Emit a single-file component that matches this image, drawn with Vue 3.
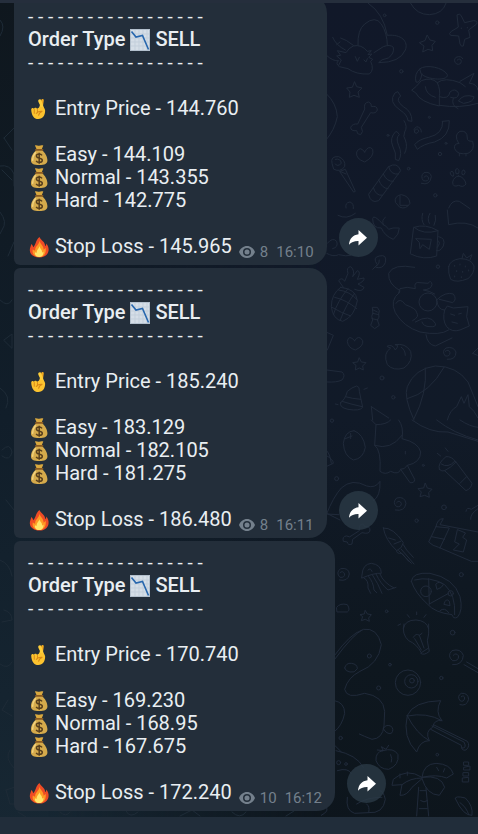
<template>
  <div class="screen">
    <svg class="wallpaper" viewBox="0 0 478 834" preserveAspectRatio="xMaxYMin slice" aria-hidden="true">
      <defs>
        <linearGradient id="wall-base" x1="0" y1="0" x2="0" y2="1">
          <stop offset="0" stop-color="#0f171e" />
          <stop offset="0.5" stop-color="#111e2a" />
          <stop offset="1" stop-color="#172733" />
        </linearGradient>
        <linearGradient id="wall-side" x1="0" y1="0" x2="0" y2="1">
          <stop offset="0" stop-color="#111829" />
          <stop offset="0.5" stop-color="#111a28" />
          <stop offset="0.8" stop-color="#0e171f" />
          <stop offset="1" stop-color="#0d151c" />
        </linearGradient>
        <linearGradient id="wall-fade" x1="0" y1="0" x2="1" y2="0">
          <stop offset="0.1" stop-color="#fff" stop-opacity="0" />
          <stop offset="0.68" stop-color="#fff" />
        </linearGradient>
        <mask id="wall-mask"><rect width="478" height="834" fill="url(#wall-fade)" /></mask>
      </defs>
      <rect width="478" height="834" fill="url(#wall-base)" />
      <rect width="478" height="834" fill="url(#wall-side)" mask="url(#wall-mask)" />
      <g
        v-for="tile in doodles"
        :key="tile.y"
        class="doodle"
        :transform="`translate(320 ${tile.y}) scale(0.3333)`"
      >
        <path v-for="d in tile.paths" :key="d" :d="d" />
        <circle v-for="([cx, cy, r], i) in tile.circles" :key="i" :cx="cx" :cy="cy" :r="r" />
      </g>
      <g class="doodle">
        <path v-for="d in edgeDoodles" :key="d" :d="d" />
      </g>
    </svg>

    <div class="topbar"></div>

    <main class="chat">
      <article v-for="post in posts" :key="post.time" class="row">
        <div class="bubble">
          <p class="line divider">{{ divider }}</p>
          <p class="line strong">
            Order Type
            <svg class="emoji chart" viewBox="0 0 20 22" role="img" aria-label="chart decreasing">
              <rect width="20" height="22" fill="#b3c0cd" />
              <rect x="1" y="1" width="18" height="20" fill="#d5dee7" />
              <path d="M5 1v20M9 1v20M13 1v20M17 1v20M1 5h18M1 9h18M1 13h18M1 17h18" stroke="#c3cfdb" />
              <path d="M1.500 2.500 6 8l6.500-1.500L18.500 20.500" fill="none" stroke="#2767ae" stroke-width="1.600" />
            </svg>
            {{ post.type }}
          </p>
          <p class="line divider">{{ divider }}</p>
          <p class="line gap">
            <svg class="emoji" viewBox="0 0 24 24" role="img" aria-label="crossed fingers">
              <path d="M12.500 12 14.500 2.300c.300-1.600 2.800-1.400 2.700.400L15.900 12z" fill="#f2a91f" />
              <path d="M9.600 1.900c1-1.100 2.500-.500 2.900.700l3.300 9.100-2.600 3-3.100-4 .900-3-1.700-3.700c-.300-.800-.200-1.600.300-2.100z" fill="#ffcf3a" transform="translate(2 0)" />
              <path d="M3.500 12.500c0-1.900 2.300-2.300 3-.700.300-1.600 2.900-1.800 3.400 0l3.600-2.300c2.400-.200 5.200 1.300 5.200 4.200 0 5.100-2.300 9.300-7.500 9.300-4.700 0-7.400-3.800-7.700-10.500z" fill="#fcc32f" />
              <path d="M6.800 12.500v4M10.300 12.500v3.500M9 16.800c2-2.300 4.500-2.600 6.600-2.300-2.300.800-3.600 2-4 4.400" fill="none" stroke="#d98817" stroke-width="1.100" stroke-linecap="round" />
            </svg>
            Entry Price - {{ post.entry }}
          </p>
          <p
            v-for="(target, i) in post.targets"
            :key="target.name"
            class="line"
            :class="{ gap: i === 0 }"
          >
            <svg class="emoji" viewBox="0 0 24 24" role="img" aria-label="money bag">
              <path d="M7.600 1.600c1.600-.600 2.600.500 4.400.200 1.800-.300 3-.800 4.700-.100L14.900 6H9.500z" fill="#d9a83f" />
              <path d="M9.200 6.500h6c3.300 2.800 6 7 6 11.300 0 4-3 5.200-9 5.200s-9-1.200-9-5.200c0-4.300 2.700-8.500 6-11.300z" fill="#d5aa4b" />
              <path d="M8 9.500c-2 2.500-3.200 5.200-2.900 8.200" fill="none" stroke="#f3d481" stroke-width="1.600" stroke-linecap="round" />
              <path d="M8.600 6.400h7.200" stroke="#8b5b22" stroke-width="2" stroke-linecap="round" />
              <path d="M15.300 12.400c-.700-1-1.800-1.400-3.100-1.400-1.700 0-3 .800-3 2.200 0 3.300 6.400 1.300 6.400 4.500 0 1.500-1.400 2.300-3.200 2.300-1.600 0-2.800-.500-3.500-1.700M12.200 9.500v12" fill="none" stroke="#553d1d" stroke-width="1.600" />
            </svg>
            {{ target.name }} - {{ target.price }}
          </p>
          <div class="line gap last">
            <p class="stop">
              <svg class="emoji" viewBox="0 0 24 24" role="img" aria-label="fire">
                <path d="M12.500 1c1.600 3.800 6.300 5 6.200 10 .9-.600 1.300-1.600 1.300-2.900 2 2.600 2.800 5.100 2.400 7.900-.600 4.500-4.600 7.500-10.100 7.500S2.200 20.400 2 15.800c-.200-2.800 1.200-4.600 1.600-7.100 1.200.900 1.900 2 2 3.500C9 9.400 7.900 4.700 12.500 1z" fill="#ee4b25" />
                <path d="M12.600 5c.300 3.800 4.700 5.400 4.400 9.900 1-.400 1.700-1.200 2-2.300 1.500 5.500-1.300 10.400-6.700 10.400-5 0-8.400-3.600-7-8.600.700 1.100 1.600 1.500 2.500 1.400C7.400 11.500 12.200 10 12.600 5z" fill="#ff9a24" />
                <path d="M12.600 11c0 2.800 3.200 4 2.700 6.900.7-.100 1.200-.500 1.600-1.100.3 3.700-1.500 6.200-4.700 6.200-3.400 0-5.300-2.600-4.500-5.600.500.700 1.100 1 1.800.900-.4-3 2.500-4.300 3.100-7.300z" fill="#ffe56a" />
              </svg>
              Stop Loss - {{ post.stop }}
            </p>
            <div class="meta">
              <svg class="eye" viewBox="0 0 16 12" role="img" aria-label="views">
                <path fill-rule="evenodd" d="M8 0c3.600 0 6.600 2.400 8 6-1.400 3.600-4.400 6-8 6S1.400 9.600 0 6c1.400-3.600 4.400-6 8-6zm0 2a4 4 0 1 0 0 8 4 4 0 0 0 0-8z" />
                <circle cx="8" cy="6" r="2.500" />
              </svg>
              <span>{{ post.views }}</span>
              <time>{{ post.time }}</time>
            </div>
          </div>
        </div>
        <button class="share" type="button" aria-label="Forward message">
          <svg viewBox="0 0 20 18" aria-hidden="true">
            <path d="M10.500 1v4.300C5 6 1.500 9.500 1 15.800c2.400-3 5.300-4 9.500-3.900v4.500L19 8.700z" />
          </svg>
        </button>
      </article>
    </main>

    <footer class="bottombar"></footer>
  </div>
</template>

<script setup>
const divider = Array(18).fill('-').join(' ')

const posts = [
  {
    type: 'SELL',
    entry: '144.760',
    targets: [
      { name: 'Easy', price: '144.109' },
      { name: 'Normal', price: '143.355' },
      { name: 'Hard', price: '142.775' }
    ],
    stop: '145.965',
    views: 8,
    time: '16:10'
  },
  {
    type: 'SELL',
    entry: '185.240',
    targets: [
      { name: 'Easy', price: '183.129' },
      { name: 'Normal', price: '182.105' },
      { name: 'Hard', price: '181.275' }
    ],
    stop: '186.480',
    views: 8,
    time: '16:11'
  },
  {
    type: 'SELL',
    entry: '170.740',
    targets: [
      { name: 'Easy', price: '169.230' },
      { name: 'Normal', price: '168.95' },
      { name: 'Hard', price: '167.675' }
    ],
    stop: '172.240',
    views: 10,
    time: '16:12'
  }
]

// Line art of the wallpaper, one group per vertical section
const doodles = [
  {
    y: 0,
    paths: [
      // axolotl
      'M145 10Q190 40 202 106C245 102 266 125 256 150Q240 188 176 188Q182 178 205 174Q224 160 220 142Q210 132 190 140L162 158M114 136Q112 90 134 72Q166 46 184 72Q202 100 202 136M18 165Q40 185 56 182Q45 190 58 200L84 206Q108 224 148 222Q164 210 152 184L158 178L146 172L156 162L144 164L154 152L142 154Q124 132 100 138Q86 144 78 158L52 152L62 166L50 168L64 180L56 196M38 112Q48 136 76 150M50 134L60 126M62 114Q78 118 100 136M106 170L112 184L118 172M132 180L138 186L142 176',
      // beach ball, starfish, stars
      'M272 10Q290 44 328 44Q368 42 378 10',
      'M412 44Q420 38 424 48L434 68L460 62Q474 62 470 72L446 90L450 112L434 118L430 138Q424 142 420 132L416 108L392 106Q384 102 394 94L414 82ZM424 84v2M442 82v2',
      'M322 106L330 120L346 124L336 136L338 152L324 148L308 156L312 138L298 128L314 122Z',
      'M104 246L110 260L126 264L114 276L118 292L102 286L88 292L90 276L80 264L96 262Z',
      // sleeping dog
      'M300 206C318 192 370 202 382 224C386 244 320 240 304 222ZM300 206Q282 222 288 246Q300 252 306 222M276 270Q288 262 304 242Q334 230 352 248Q362 272 358 288L358 318Q300 306 288 280ZM316 260Q318 284 346 292M358 290Q386 300 390 276Q406 262 416 280Q414 300 392 292M352 248Q374 230 420 248L436 260M420 244L462 220L448 250Q470 250 474 270M400 294Q392 316 414 326M416 302Q430 280 462 290Q462 306 432 310ZM358 316Q420 326 474 310',
      // bone, heart, streamers
      'M134 326Q130 308 146 306Q156 310 154 320Q172 316 172 330Q168 342 152 338L124 382Q132 396 122 404Q110 404 110 392Q92 394 92 382Q98 370 112 372Z',
      'M134 456Q120 436 110 456Q106 476 134 486Q164 470 158 448Q146 434 134 456Z',
      'M234 276L242 288Q224 300 250 320Q276 334 276 364L264 362Q262 344 240 330Q204 306 224 280ZM232 396L238 404Q226 414 236 436Q248 462 236 482L226 478Q230 460 218 438Q208 414 226 396ZM252 362Q264 380 254 396Q248 410 256 420Q264 440 254 460',
      'M368 364L388 362Q390 410 344 426Q310 432 292 448L284 434Q296 418 326 412Q370 402 368 364Z',
      // firework tube, duck, paw
      'M206 500Q232 484 242 512L176 602Q152 612 146 584ZM206 500Q212 526 236 522M190 522Q200 546 220 544M176 540Q186 566 204 566M160 562Q166 588 188 586',
      'M416 430Q400 404 420 394Q442 390 442 414Q440 424 458 424Q466 450 444 460Q412 466 404 446Q400 432 416 430ZM418 460v8M438 460v8',
      'M416 528Q434 532 438 552Q430 564 416 556Q398 564 398 546Q402 530 416 528ZM394 526q-8-10 2-12q8 4 4 14zM408 520q-4-14 4-14q8 4 4 14zM426 522q-2-12 6-12q8 6 0 14z',
      // lollipop
      'M36 490Q30 468 56 470Q78 480 74 500Q60 518 42 508ZM46 478q16-4 18 12q-12 12-18 2M60 514L76 508L106 574L102 576ZM60 514l18 8',
      'M18 280Q50 310 52 350Q44 390 18 420M412 180q10-8 12 4q-2 12-14 8q-12-10-2-20q16-6 20 4M286 390q8-8 10 4q-4 10-12 4q-6-12 6-18q14 2 14 16M312 532q8-10 14 2q0 12-16 8q-10-14 2-24q20-4 22 12q-4 28-30 20M226 606q-4-18 18-22q24 4 26 26q-12 20-30 12zM240 588v28h24M386 624Q396 598 418 604L450 626M78 624q-4-16 12-18q12 4 10 20'
    ],
    circles: [[194, 46, 4], [352, 68, 5], [244, 214, 5], [328, 352, 3], [378, 430, 3], [360, 462, 5], [346, 586, 5], [204, 406, 3], [266, 506, 4]]
  },
  {
    y: 210,
    paths: [
      // bow, mug, leaf
      'M190 44Q160 10 158 26Q158 56 184 54Q194 78 220 88Q238 74 238 54Q216 52 206 58Q198 46 190 44M196 22Q184 30 190 44',
      'M282 52Q316 40 354 62L350 138Q312 152 272 132ZM282 52Q310 76 354 62M356 80Q378 84 370 108Q360 126 350 122M354 92Q364 98 352 112M288 86L334 88L328 118L308 104L300 116L298 98ZM312 44Q302 30 308 10M328 40Q320 26 330 10M342 46Q350 30 346 16',
      'M158 178L172 164Q156 142 178 138Q202 132 196 158Q188 178 168 172M178 150Q180 160 170 168',
      // strawberry
      'M386 170Q390 150 420 146Q454 146 462 168Q464 190 444 206Q410 220 392 208Q384 190 386 170ZM426 146L430 130L440 144L456 134L450 150M404 166v3M420 162v3M436 168v3M410 182v3M428 184v3M446 180v3M404 198v3M424 200v3',
      // pineapple
      'M62 232Q34 252 34 290Q38 328 68 334Q104 320 112 272Q108 236 62 232ZM44 262Q80 270 110 296M36 292Q66 310 92 318M56 240Q90 244 112 270M84 236Q52 274 40 314M104 250Q78 284 60 332M70 232L56 212Q66 200 74 214L84 190Q78 172 92 170Q106 182 98 200L112 182Q124 184 112 208L132 204Q134 214 114 222L132 232Q128 248 104 238',
      // sleeping cat
      'M284 172Q220 160 206 190Q204 222 240 242Q232 262 240 236Q260 228 286 236Q280 214 300 218L324 220Q334 208 336 224Q334 238 310 240Q328 242 344 252M238 248Q208 270 226 308Q250 350 300 366Q360 378 386 360M228 280Q240 260 256 284Q290 296 290 308Q300 320 278 332M374 300L382 288L400 294L444 290L440 320L448 348L420 360Q396 368 380 350Q366 330 374 300M392 312l12 4M416 312l8-2M396 336l16 4M372 300Q354 300 350 270Q376 244 400 252Q412 268 398 278L358 268M318 374Q322 404 346 408L396 384M286 336Q330 310 346 340Q350 352 330 350Q310 350 306 336',
      // candy, peach
      'M158 292L172 292Q182 302 176 312Q180 322 172 330L178 346L164 356L152 346L158 330Q152 318 158 310ZM158 310l18 4M156 326l18 4M160 300l12 6',
      'M226 404Q256 398 272 424Q280 454 252 474Q220 484 202 464Q188 430 212 414Q198 410 202 408Q218 402 226 420Q240 404 226 404M244 412Q256 420 256 436',
      'M104 392Q86 372 82 394Q84 414 106 420Q132 408 128 392Q116 372 104 392Z',
      'M118 444L124 456L138 458L128 468L130 480L118 474L106 480L108 466L98 458L112 456Z',
      // basketball
      'M282 630Q250 560 262 530Q284 476 346 468Q410 468 444 516Q462 560 474 590M316 474Q322 550 282 626M262 566Q330 548 372 472M382 630Q390 600 410 590L424 560L432 580L444 554L448 590Q462 600 474 624',
      // bell
      'M62 578Q76 568 82 544Q96 532 110 528Q120 530 118 544L128 592Q120 604 84 598Q56 592 62 578ZM66 574Q90 582 126 590M76 560Q96 566 122 568M132 538l10-4M54 584l-8-2',
      'M20 480L66 486Q78 496 66 510Q50 518 20 516M18 366L40 376L22 420M154 590L158 630M154 590L206 624M20 130Q40 142 56 134Q80 140 92 136M22 100Q38 80 50 94Q56 112 38 116M376 424q10-8 14 4q0 12-14 10q-12-14 2-24q22-6 30 12q0 24-26 22M382 0L386 44Q440 30 474 54M54 16Q80 30 106 10M458 430l16-16M458 430l14 6'
    ],
    circles: [[324, 276, 27], [186, 504, 6], [220, 562, 5], [354, 170, 5]]
  },
  {
    y: 420,
    paths: [
      // egg and ice pop
      'M102 32Q130 42 136 82Q130 116 100 120Q72 108 70 70Q74 34 102 32M76 56l20-8M92 40v16',
      'M154 0L168 14L164 76Q184 90 180 154Q196 166 212 154Q236 166 242 148L270 188Q284 190 284 178L262 136Q302 128 302 96Q296 68 246 56Q252 20 236 0M164 76Q212 92 246 46M168 14Q200 14 212 0M242 148Q254 150 262 136M256 94v8',
      // flashlight
      'M358 148Q352 130 378 110Q394 108 408 126L456 190Q454 206 438 212L374 152Q366 156 358 148M364 132Q384 146 404 124M374 152Q392 144 408 126M420 190L440 170M376 84l8 10M352 100l10 8',
      'M316 190L322 204L336 208L326 218L328 232L314 226L300 230L304 216L294 206L310 204Z',
      // fabric behind the share button
      'M18 286Q40 230 64 204Q96 174 140 198Q166 206 180 184Q182 230 160 242M20 280L60 300M18 282L56 284',
      'M78 348Q66 350 70 364L82 366Q84 378 96 372L98 358L126 338Q150 344 150 330Q150 318 134 320Q130 306 118 318L118 332L90 350Z',
      // squid
      'M190 324Q220 322 250 368Q246 386 230 392Q196 360 190 324ZM230 392Q228 402 246 400L266 424M236 392L274 430M244 388L282 432M250 374L260 390L280 412M206 354l20 6M222 372l20-8',
      // carton
      'M348 320Q352 296 370 296L360 314L474 336M348 320L326 366Q338 378 356 382L454 424L474 424M348 320L388 324L360 384M334 350L374 358M412 330L404 366L418 372L400 390L430 396L440 360L428 352L436 340Z',
      // jellyfish
      'M126 464Q128 432 154 430Q184 434 184 460Q164 458 126 474ZM132 474Q146 480 144 504L152 520M146 470Q160 486 162 510L170 518M158 466Q174 490 186 520M168 462Q182 492 204 510L228 502M180 462Q190 488 222 504M144 450q8-8 12 4',
      // pizza slice
      'M274 484Q276 456 330 460Q402 474 420 530Q430 572 412 592Q400 598 396 584Q344 578 322 552Q286 520 274 484ZM284 480Q330 468 374 494Q408 526 404 584M326 476L328 552M328 552L386 520M348 492Q360 480 370 494Q366 504 352 508ZM372 552Q378 532 388 544L390 556ZM360 572Q374 560 386 578',
      'M50 562Q60 548 82 554Q92 570 82 576L52 576ZM136 572L142 582L154 584L146 594L148 604L136 598L124 602L128 590L120 584L132 582ZM250 626Q254 600 288 600Q320 602 326 626M290 576v8M262 584l6 8M318 584l-6 8',
      'M276 0Q330 40 384 36L474 64M350 0Q400 40 474 60M420 0Q450 20 474 22M60 458q8-8 14 4q0 12-14 10q-14-14 2-26q24-4 26 16q-4 24-30 18M230 248q8-10 14 2q0 12-14 10q-14-12 0-26q24-6 28 16q-4 26-32 20M438 274Q440 260 454 268L474 256M452 298Q450 282 474 266M18 106Q40 118 40 130L18 140M18 90Q30 100 34 130'
    ],
    circles: [[50, 176, 6], [372, 262, 7], [290, 302, 5], [200, 574, 4], [424, 464, 6], [310, 136, 3], [318, 514, 16], [392, 520, 8], [36, 2, 5]]
  },
  {
    y: 624,
    paths: [
      // headphone cable
      'M44 106Q100 30 130 16Q172 10 184 62Q176 120 120 142Q84 160 74 196Q80 226 134 208Q190 216 194 262L192 306Q188 344 156 346Q130 336 118 330M44 94Q90 30 126 18M74 132Q78 116 94 118Q112 120 112 134Q104 148 90 144Q76 142 74 132',
      // light bulb
      'M252 0Q244 30 266 50Q290 60 304 86L326 72Q318 50 326 30V0M280 40Q288 26 298 34L312 72M284 44L304 78M298 34L306 28M302 88Q312 96 328 82L326 72M242 0l-8 4',
      // lollipop and umbrella
      'M400 94q8-10 16 2q0 16-18 14q-18-14-2-30q26-8 34 14q-2 30-32 28M432 122L474 146M440 114L474 134M424 218q8-6 10 4q-2 14-14 8q-10-14 4-22q20-2 22 18q-6 22-26 16',
      'M262 274Q280 232 362 230Q344 264 366 290Q342 286 338 310Q314 322 328 350Q300 350 290 384Q246 340 262 274ZM262 276Q320 264 366 290M262 276Q290 330 328 350M336 306L432 354Q442 374 426 372M332 316L424 364Q424 382 438 378Q452 366 442 352L340 302',
      // cherry
      'M188 380Q166 384 168 410Q178 436 206 436Q238 424 234 392Q222 370 188 380ZM172 378L190 380L184 368L198 376L206 364M212 392Q218 404 214 414M190 314Q196 300 212 306Q224 316 214 328Q200 332 190 314',
      // palm
      'M306 460Q260 430 220 466L216 484L246 482L240 514Q260 516 276 490L306 464M306 460Q310 420 348 418Q392 420 400 450L380 462Q350 450 306 460Q364 452 374 490L358 514Q320 512 306 464M296 490L290 576M318 492L326 576M246 482Q270 462 306 462M300 500h18M302 530q10 8 20 0M298 554h24M240 450v12M262 444v10M350 430l6 10M374 434l-4 10',
      // leaf and soda lettering
      'M406 524Q404 514 436 522Q460 546 456 574Q430 576 406 524M420 536Q440 550 446 572',
      'M432 414h14v10h-14zM432 430l18-4v12h-18zM430 446h16v10h-16zM428 462l18-2v14h-18z',
      'M44 230Q74 236 74 268Q66 306 44 322M48 380Q110 392 130 430M52 440Q84 430 94 448M44 364l20 20M82 520Q76 560 104 568L146 566Q150 548 140 540M146 566Q190 570 196 526Q190 500 180 500M110 540Q140 520 186 520M18 550Q30 560 4 574'
    ],
    circles: [[398, 26, 7], [148, 96, 6], [210, 122, 4], [176, 192, 6], [364, 162, 5], [264, 176, 38], [274, 172, 20], [276, 170, 7], [352, 392, 4], [56, 416, 6], [78, 420, 4], [62, 342, 5]]
  }
]

const edgeDoodles = [
  'M0 20q6 6 0 16M4 138l10-10M4 138l8 12M0 166q10-2 14 8v12M2 170l10 10M0 212q8 10 2 18l-2 4M8 256l6-14',
  'M0 300q8 8 12 0M4 340l8-6v14zM0 388q12 8 6 20M2 450q8-8 10 2q-2 10-10 4M6 500l8 10M0 560q10 4 12 16M4 610q8 2 8 10l-10 2M0 664q8 6 12-2M8 700l-6 10 10 6',
  'M10 750q-6 8 4 18M6 790l12-4M6 790l4 14h4M18 812l8 5M60 812q6 6 10 0M126 811q4 8 12 1M180 816l12-6 8 6M232 812q8 8 14 0M286 816l8-5'
]
</script>

<style>
html,
body {
  background: #101922;
}
body {
  margin: 0;
}
</style>

<style scoped>
.screen {
  position: relative;
  display: flex;
  flex-direction: column;
  height: 100vh;
  overflow: hidden;
  font-family: Roboto, 'Liberation Sans', sans-serif;
  color: #e9eef2;
}

.wallpaper {
  position: absolute;
  inset: 0;
  width: 100%;
  height: 100%;
}

.doodle {
  fill: none;
  stroke: #202a3a;
  stroke-width: 3;
  stroke-linecap: round;
  stroke-linejoin: round;
}

.doodle:last-child {
  stroke: #1e2b37;
  stroke-width: 1;
}

.topbar {
  position: relative;
  flex: none;
  height: 3px;
  background: #252e3c;
}

.chat {
  position: relative;
  flex: 1;
  min-height: 0;
  display: flex;
  flex-direction: column;
  justify-content: flex-end;
  gap: 3px;
  padding: 0 14px 6px;
  overflow: hidden;
}

.row {
  flex: none;
  display: flex;
  align-items: flex-end;
  gap: 12px;
}

.bubble {
  padding: 10px 13px 7px 14px;
  border-radius: 6px 18px 18px 6px;
  background: #232e3a;
}

.line {
  margin: 0;
  font-size: 20px;
  line-height: 23px;
  white-space: nowrap;
}

.strong {
  font-weight: 500;
}

.divider {
  font-size: 19px;
}

.gap {
  margin-top: 23px;
}

.emoji {
  width: 22px;
  height: 22px;
  vertical-align: -5px;
}

.chart {
  width: 20px;
}

.last {
  display: flex;
  align-items: flex-end;
  gap: 7px;
}

.stop {
  margin: 0;
}

.meta {
  display: flex;
  align-items: center;
  margin-bottom: -2px;
  font-size: 15px;
  line-height: 16px;
  color: #74808c;
}

.meta time {
  margin-left: 8px;
}

.eye {
  width: 16px;
  height: 12px;
  margin-right: 5px;
  fill: #74808c;
}

.share {
  flex: none;
  display: flex;
  align-items: center;
  justify-content: center;
  width: 39px;
  height: 39px;
  margin-bottom: 8px;
  padding: 0;
  border: 0;
  border-radius: 50%;
  background: rgba(43, 57, 70, 0.8);
}

.share svg {
  width: 20px;
  height: 18px;
  fill: #fff;
}

.bottombar {
  position: relative;
  flex: none;
  height: 17px;
  background: #212d3a;
}
</style>
